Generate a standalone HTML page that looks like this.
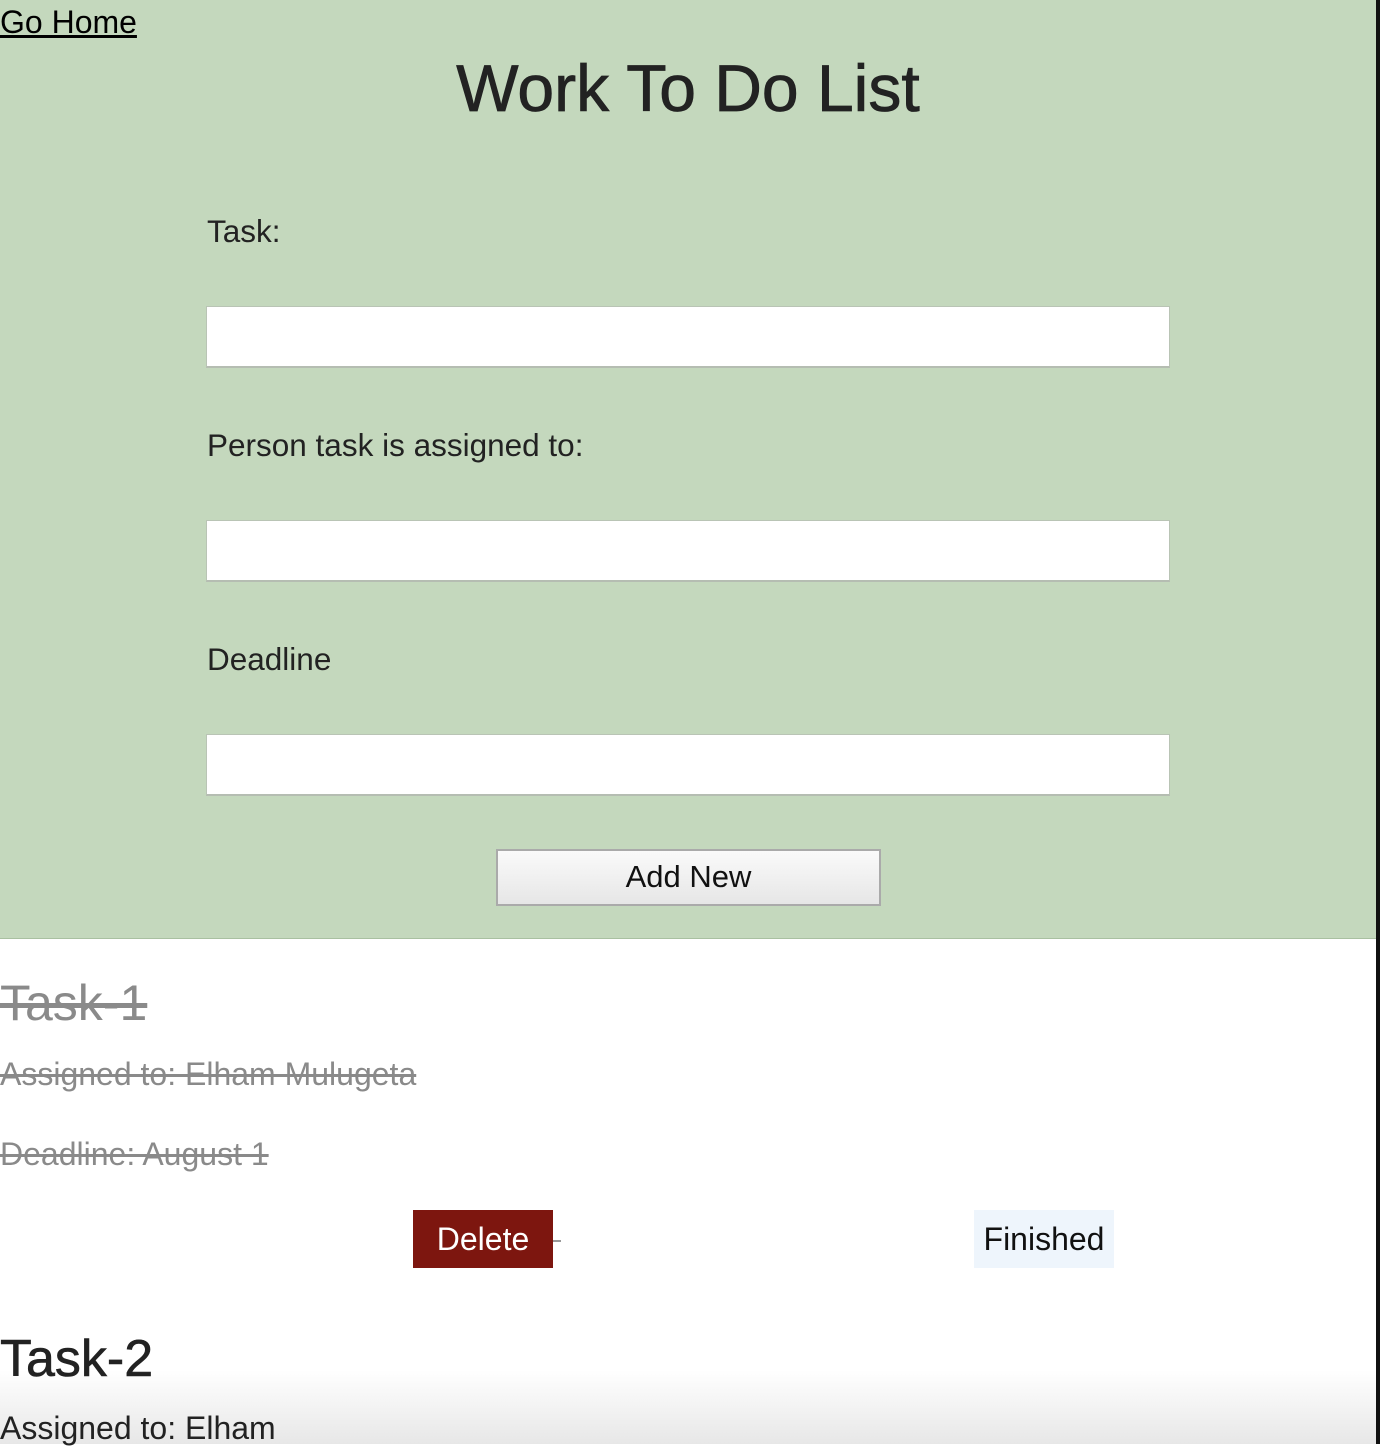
<!DOCTYPE html>
<html><head><style>
*{margin:0;padding:0;box-sizing:border-box}
body{width:1380px;height:1444px;position:relative;overflow:hidden;background:#fff;font-family:"Liberation Sans",sans-serif;color:#222}
.a{position:absolute;white-space:nowrap}
.in{position:absolute;left:206px;width:964px;height:62px;background:#fff;border:1px solid #b9c4b5;border-bottom:2px solid #b5bdb2}
.lbl{position:absolute;left:207px;font-size:31.5px;color:#222}
.s{color:#8a8a8a;text-decoration:line-through}
</style></head><body>
<div class="a" style="left:0;top:0;width:1376px;height:939px;background:#c4d8bd;border-bottom:1px solid #a9c0a1"></div>
<div class="a" style="left:1376px;top:0;width:4px;height:1444px;background:#111"></div>
<div class="a" style="left:0;top:4px;font-size:32px;color:#000;text-decoration:underline">Go Home</div>
<div class="a" style="left:0;width:1376px;top:50px;text-align:center;font-size:66px;color:#222;-webkit-text-stroke:0.8px #222">Work To Do List</div>
<div class="lbl" style="top:213px">Task:</div>
<div class="in" style="top:306px"></div>
<div class="lbl" style="top:427px">Person task is assigned to:</div>
<div class="in" style="top:520px"></div>
<div class="lbl" style="top:641px">Deadline</div>
<div class="in" style="top:734px"></div>
<div class="a" style="left:496px;top:849px;width:385px;height:57px;border:2px solid #aaa;background:linear-gradient(#fafafa,#e6e6e6);font-size:31px;text-align:center;line-height:52px;color:#111">Add New</div>
<div class="a" style="left:0;top:1370px;width:1376px;height:74px;background:linear-gradient(rgba(255,255,255,0),rgba(225,225,225,.8))"></div>
<div class="a s" style="left:0;top:974px;font-size:50px">Task-1</div>
<div class="a s" style="left:0;top:1056px;font-size:32px">Assigned to: Elham Mulugeta</div>
<div class="a s" style="left:0;top:1136px;font-size:32px">Deadline: August 1</div>
<div class="a" style="left:413px;top:1210px;width:140px;height:58px;background:#7d160f;color:#fff;font-size:32px;text-align:center;line-height:58px">Delete</div>
<div class="a" style="left:553px;top:1240px;width:8px;height:2px;background:#999"></div>
<div class="a" style="left:974px;top:1210px;width:140px;height:58px;background:#eef5fc;color:#111;font-size:32px;text-align:center;line-height:58px">Finished</div>
<div class="a" style="left:0;top:1329px;font-size:52px;color:#222;-webkit-text-stroke:0.6px #222">Task-2</div>
<div class="a" style="left:0;top:1410px;font-size:32px;color:#222">Assigned to: Elham</div>
</body></html>
